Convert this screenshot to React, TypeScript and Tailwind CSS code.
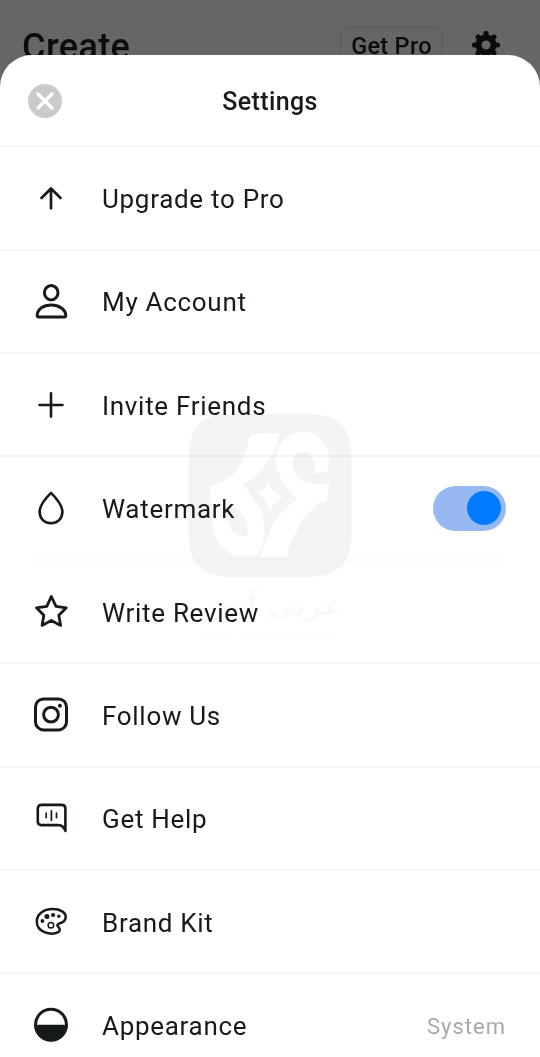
import type { ReactNode } from "react";

const line = {
  fill: "none",
  stroke: "#161a1a",
  strokeLinecap: "round" as const,
  strokeLinejoin: "round" as const,
};

function Icon({ children }: { children: ReactNode }) {
  return (
    <svg viewBox="0 0 40 40" className="ml-[31px] size-10 shrink-0" aria-hidden="true">
      {children}
    </svg>
  );
}

function Toggle() {
  return (
    <div className="mr-[34px] flex h-[45px] w-[73px] items-center justify-end rounded-full bg-[#98b8f2] pr-[5px]">
      <div className="size-[34px] rounded-full bg-[#007bff]" />
    </div>
  );
}

const rows: { label: string; icon: ReactNode; end?: ReactNode; faint?: boolean }[] = [
  {
    label: "Upgrade to Pro",
    icon: <path {...line} strokeWidth="2.7" d="M20 30.3V10.5M10.5 20L20 10.5l9.5 9.5" />,
  },
  {
    label: "My Account",
    icon: (
      <g {...line} strokeWidth="3">
        <ellipse cx="20.2" cy="11.7" rx="6.8" ry="7.2" />
        <path d="M6.2 34.6c0-6.2 6.2-10.7 14-10.7s14.6 4.5 14.6 10.7c0 1-.6 1.5-1.6 1.5H7.8c-1 0-1.6-.5-1.6-1.5z" />
      </g>
    ),
  },
  {
    label: "Invite Friends",
    icon: <path {...line} strokeWidth="2.6" d="M20 8.4v23.2M8.5 20h23" />,
  },
  {
    label: "Watermark",
    faint: true,
    end: <Toggle />,
    icon: (
      <path
        {...line}
        strokeWidth="2.6"
        d="M20 4.8c-3 3-11.4 11.5-11.4 19C8.6 30.7 13.5 35.3 20 35.3s11.4-4.6 11.4-11.5c0-7.5-8.4-16-11.4-19z"
      />
    ),
  },
  {
    label: "Write Review",
    icon: (
      <path
        {...line}
        strokeWidth="2.8"
        d="M20.3 4.5l4.7 9.8 10.3 1.5-7.5 7.4 1.9 10.2-9.4-4.9-9.2 4.9 1.7-10.2-7.3-7.4 10.3-1.5z"
      />
    ),
  },
  {
    label: "Follow Us",
    icon: (
      <g {...line} strokeWidth="3">
        <rect x="4.5" y="3.9" width="31" height="31" rx="8" />
        <circle cx="20" cy="19.6" r="7.4" />
        <circle cx="28.9" cy="10.8" r="2" fill="#161a1a" stroke="none" />
      </g>
    ),
  },
  {
    label: "Get Help",
    icon: (
      <g {...line} strokeWidth="2.6">
        <path d="M10.3 6.9h20.300q3.800 0 3.800 3.800V32.900c-1.500-4.200-3.400-5.800-7-5.800H10.300q-3.500 0-3.500-3.600V10.500q0-3.600 3.500-3.600z" />
        <path strokeWidth="1.7" d="M15.200 15.200v4.400M20.400 12.900v9.400M25.500 15.200v4.400" />
      </g>
    ),
  },
  {
    label: "Brand Kit",
    icon: (
      <g {...line} strokeWidth="2.5">
        <path d="M21.500 7.100c8 0 13.500 3.300 13.200 8.100-.3 3.700-3.500 5.800-6.700 6.400-2.100.5-2 2.100-.5 3.500 1.900 1.800 1.600 4.300-.7 5.300-3.200 1.500-9.100 1.400-13.500-.3-5-2-7.500-6-7.500-10.500 0-7.600 7-12.500 15.700-12.500z" />
        <circle cx="19.900" cy="23.200" r="2.800" strokeWidth="1.500" />
        <g fill="#161a1a" stroke="none">
          <circle cx="11.400" cy="19" r="1.900" />
          <circle cx="15.900" cy="14.500" r="2.500" />
          <circle cx="22.100" cy="13" r="2.100" />
          <circle cx="27.800" cy="14.300" r="1.700" />
        </g>
      </g>
    ),
  },
  {
    label: "Appearance",
    end: <span className="mr-[34px] mt-[3px] text-[22px] tracking-[1px] text-[#a9a9a9]">System</span>,
    icon: (
      <>
        <circle {...line} cx="20" cy="19.7" r="15.500" strokeWidth="3" />
        <path d="M3.500 19.700h33a16.500 16.500 0 0 1-33 0z" fill="#161a1a" />
      </>
    ),
  },
];

function Watermark() {
  return (
    <div className="pointer-events-none absolute left-[188px] top-[414px] flex w-[164px] flex-col items-center whitespace-nowrap mix-blend-multiply">
      <svg viewBox="0 0 164 164" className="h-[163px] w-[164px]" aria-hidden="true">
        <path
          fill="#000"
          fillOpacity=".043"
          fillRule="evenodd"
          d="M42 0h80q42 0 42 42v80q0 42-42 42H42Q0 164 0 122V42Q0 0 42 0z
          M64 20L92 19Q89 33 82 44Q73 61 55 71Q63 82 69 91Q75 99 75 108Q78 122 74 131Q71 143 60 143H47Q37 138 32 131Q24 120 24 108L28 91L22 89V73Q42 68 52 51Q59 41 60 26Z
          M42 90Q39 96 40 104Q41 115 46 120Q51 124 59 122Q61 112 57 106Q52 96 42 90Z
          M115 18Q128 17 135 28Q144 39 141 50L139 58L127 60Q129 50 125 45Q121 37 115 38Q106 38 105 46Q103 54 107 59Q111 67 119 69Q131 73 142 69L139 88L130 90Q126 97 122 98Q112 108 109 118Q101 130 99 144H72Q75 133 80 124Q84 109 95 98L109 85Q96 73 92 63Q87 50 89 41Q90 30 99 24Q106 18 115 18Z
          M80 69Q85 81 95 84Q86 88 82 98Q78 86 69 79Q77 78 80 69Z"
        />
      </svg>
      <div dir="rtl" className="mt-[8px] font-['DejaVu_Sans',sans-serif] text-[28px] font-bold leading-[42px] text-[#f9f9f9]">
        عربي آبس
      </div>
      <div className="font-[Roboto,sans-serif] text-[13px] leading-[16px] tracking-[1.5px] text-[#fbfbfb]">
        www.ArabiApps.me
      </div>
    </div>
  );
}

export default function App() {
  return (
    <main className="relative flex h-[1057px] w-[540px] flex-col overflow-hidden bg-[#666] font-[Roboto,sans-serif] text-[#161a1a]">
      <header className="flex h-[55px] shrink-0 items-start overflow-hidden text-[#0b0d0d]">
        <h1 className="ml-[22px] mt-[26px] text-[36px] font-medium leading-[42px] tracking-[.4px]">Create</h1>
        <div className="ml-auto mr-[29px] mt-[26px] flex h-[42px] w-[103px] shrink-0 items-start justify-center rounded-lg border-2 border-[#606060] pt-[4px] text-[23.5px] font-medium leading-[28px] tracking-[.3px]">
          Get Pro
        </div>
        <svg viewBox="-14 -14 28 28" className="mr-[40px] mt-[31px] size-7" aria-hidden="true">
          <circle r="7.5" fill="none" stroke="#0b0d0d" strokeWidth="6" />
          <path
            d="M0-11.500V-9M0 11.500V9M-11.500 0H-9M11.500 0H9M-7.900-7.900L-6-6M7.900 7.900L6 6M-7.900 7.900L-6 6M7.900-7.900L6-6"
            stroke="#0b0d0d"
            strokeWidth="5.2"
            strokeLinecap="round"
          />
        </svg>
      </header>
      <section className="flex min-h-0 flex-1 flex-col rounded-t-[32px] bg-white">
        <div className="grid h-[92.3px] shrink-0 grid-cols-[1fr_auto_1fr] items-center border-b-2 border-[#f5f5f5]">
          <button className="ml-7 mt-px size-[34px]" aria-label="Close">
            <svg viewBox="0 0 34 34" className="size-[34px]">
              <circle cx="17" cy="17" r="17" fill="#cbcbcb" />
              <path d="M10 10l14 14M24 10L10 24" stroke="#fff" strokeWidth="3.2" strokeLinecap="round" />
            </svg>
          </button>
          <h2 className="mt-[4px] text-[25px] font-medium tracking-[.4px]">Settings</h2>
        </div>
        {rows.map((row) => (
          <div key={row.label} className="flex h-[103.4px] shrink-0 flex-col">
            <div className="flex flex-1 items-center">
              <Icon>{row.icon}</Icon>
              <span className="ml-[31px] mt-[3px] flex-1 text-[26px] tracking-[.7px]">{row.label}</span>
              {row.end}
            </div>
            {row.faint ? <div className="mx-8 h-[2px] bg-[#fbfbfb]" /> : <div className="h-[2px] bg-[#f5f5f5]" />}
          </div>
        ))}
      </section>
      <Watermark />
    </main>
  );
}
